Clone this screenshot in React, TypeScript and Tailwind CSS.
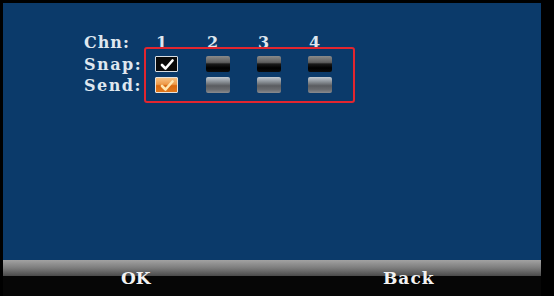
import React from "react";

const font = { fontFamily: '"DejaVu Serif", "Liberation Serif", serif' };

function Check({ color }: { color: string }) {
  return (
    <svg width="14" height="11" viewBox="0 0 14 11" className="block">
      <path d="M2 6 L5.5 9.5 L12.5 1.5" fill="none" stroke={color} strokeWidth="2.6" strokeLinecap="round" strokeLinejoin="round" />
    </svg>
  );
}

function Box({ kind }: { kind: "snapOn" | "snapOff" | "sendOn" | "sendOff" }) {
  if (kind === "snapOn") {
    return (
      <div className="mt-[2px] w-[23px] h-[16px] bg-[#0a0a0a] border border-[#d8dde2] rounded-[1px] flex items-center justify-center">
        <Check color="#ffffff" />
      </div>
    );
  }
  if (kind === "sendOn") {
    return (
      <div className="mt-[2px] w-[23px] h-[16px] bg-[linear-gradient(to_bottom,#f7c080_0%,#ee9a48_45%,#d9680e_55%,#e0781c_100%)] border border-[#e8e2da] rounded-[1px] flex items-center justify-center">
        <Check color="#ffe6b0" />
      </div>
    );
  }
  if (kind === "snapOff") {
    return (
      <div className="mt-[2px] w-[24px] h-[16px] rounded-[2px] bg-[linear-gradient(to_bottom,#8a8a8a_0%,#5e5e5e_40%,#1a1a1a_50%,#000000_75%,#0c0c0c_100%)]" />
    );
  }
  return (
    <div className="mt-[2px] w-[24px] h-[16px] rounded-[2px] bg-[linear-gradient(to_bottom,#c2cad2_0%,#8a9096_30%,#5a5c60_55%,#6a6c70_80%,#8a8c90_100%)]" />
  );
}

export default function App() {
  const cols = [1, 2, 3, 4];
  return (
    <div className="w-[554px] h-[296px] bg-black flex flex-col" style={font}>
      <div className="relative ml-[3px] mt-[3px] w-[538px] h-[257px] bg-[#0b3a6a] pt-[29px] pl-[81px] text-[#dfe7ef] text-[16px] font-bold tracking-[1px]">
        {/* Chn row */}
        <div className="flex h-[22px] leading-[21px]">
          <div className="w-[60px]">Chn:</div>
          {cols.map((c) => (
            <div key={c} className="w-[51px] pl-[12px] tracking-normal">{c}</div>
          ))}
        </div>
        {/* Snap row */}
        <div className="flex h-[21px] leading-[21px]">
          <div className="w-[60px] tracking-[1.5px]">Snap:</div>
          {cols.map((c) => (
            <div key={c} className="w-[51px] pl-[11px]">
              <Box kind={c === 1 ? "snapOn" : "snapOff"} />
            </div>
          ))}
        </div>
        {/* Send row */}
        <div className="flex h-[21px] leading-[21px]">
          <div className="w-[60px] tracking-[1.5px]">Send:</div>
          {cols.map((c) => (
            <div key={c} className="w-[51px] pl-[11px]">
              <Box kind={c === 1 ? "sendOn" : "sendOff"} />
            </div>
          ))}
        </div>
        {/* red annotation frame */}
        <div className="absolute left-[141px] top-[44px] w-[211px] h-[56px] border-2 border-[#e3262f] rounded-[3px]" />
      </div>
      <div className="ml-[3px] w-[538px] h-[36px] bg-[linear-gradient(to_bottom,#a2a2a2_0px,#7c7c7c_8px,#4a4a4a_16px,#060606_16px,#060606_100%)] flex items-start pt-[8px] text-[#f2f2f2] text-[17px] font-bold leading-[20px]">
        <div className="w-[118px]" />
        <div className="w-[28px]">OK</div>
        <div className="w-[234px]" />
        <div className="tracking-[1px]">Back</div>
      </div>
    </div>
  );
}
